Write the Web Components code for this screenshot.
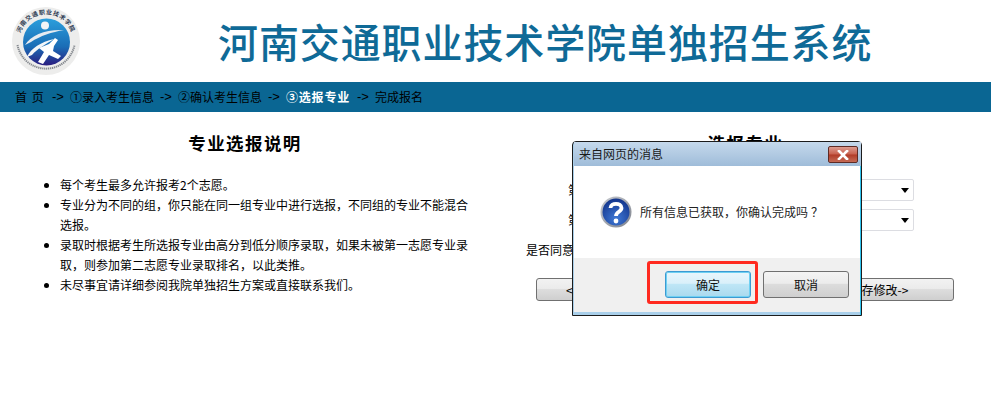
<!DOCTYPE html>
<html lang="zh">
<head>
<meta charset="utf-8">
<title>河南交通职业技术学院单独招生系统</title>
<style>
  html, body { margin: 0; padding: 0; background: #fff; }
  body { font: 12px/20px "Noto Sans CJK SC", "Liberation Sans", sans-serif; color: #000; width: 991px; height: 411px; overflow: hidden; position: relative; }
</style>
</head>
<body>
<app-header></app-header>
<step-bar></step-bar>
<main-layout>
  <info-panel slot="left" heading="专业选报说明">
    <li>每个考生最多允许报考2个志愿。</li>
    <li>专业分为不同的组，你只能在同一组专业中进行选报，不同组的专业不能混合选报。</li>
    <li>录取时根据考生所选报专业由高分到低分顺序录取，如果未被第一志愿专业录取，则参加第二志愿专业录取排名，以此类推。</li>
    <li>未尽事宜请详细参阅我院单独招生方案或直接联系我们。</li>
  </info-panel>
  <choice-panel slot="right" heading="选报专业"></choice-panel>
</main-layout>
<confirm-dialog caption="来自网页的消息" message="所有信息已获取，你确认完成吗"></confirm-dialog>

<script>
class AppHeader extends HTMLElement {
  constructor() {
    super();
    this.attachShadow({ mode: "open" });
  }

  connectedCallback() {
    this.shadowRoot.innerHTML = `
      <style>
        :host { display: flex; height: 82px; align-items: center; }
        .logo { width: 72px; height: 72px; margin: 0 0 1px 10px; flex: none; }
        h1 {
          margin: 0 0 0 136px;
          font: 500 40px/50px "Noto Sans CJK SC", sans-serif;
          letter-spacing: 0.900px;
          color: #0f6a97;
          white-space: nowrap;
        }
      </style>
      <svg class="logo" viewBox="0 0 72 72">
        <defs>
          <linearGradient id="disc" x1="0" y1="0" x2="0" y2="1">
            <stop offset="0" stop-color="#2c9fdc"/>
            <stop offset=".6" stop-color="#1a6db6"/>
            <stop offset="1" stop-color="#2a1c80"/>
          </linearGradient>
          <path id="arc-top" d="M10.500 28A26.700 26.700 0 0 1 61.500 28"/>
        </defs>
        <circle cx="36" cy="36" r="34" fill="#ededec"/>
        <circle cx="36.500" cy="37" r="23.500" fill="url(#disc)"/>
        <text font-size="6" font-weight="700" fill="#2b3850" font-family="Noto Sans CJK SC, sans-serif" letter-spacing="0.700"><textPath href="#arc-top">河南交通职业技术学院</textPath></text>
        <path d="M7.500 40A29 29 0 0 0 64.500 40" fill="none" stroke="#85898f" stroke-width="2" stroke-dasharray="1.300 .7"/>
        <circle cx="35" cy="20.500" r="4" fill="#f2f4f6"/>
        <path d="M15 40C21 30 36 24 54 25C42 27 30 31 21 37C19 38 17 39 15 40Z" fill="#e6ebf1"/>
        <path d="M17 52C21 43 31 37 44 34C36 39 27 44 22 50Z" fill="#f4f6f8"/>
        <path d="M29 43L39 39L45 33L48 35L44 41L43 46L51 51L48 54L39 50L33 59L28 57L34 47Z" fill="#fff"/>
      </svg>
      <h1>河南交通职业技术学院单独招生系统</h1>
    `;
  }
}

class StepBar extends HTMLElement {
  constructor() {
    super();
    this.attachShadow({ mode: "open" });
  }

  connectedCallback() {
    this.shadowRoot.innerHTML = `
      <style>
        :host {
          display: flex;
          height: 30px;
          align-items: center;
          padding-left: 15px;
          background: #0a6693;
          color: #000;
          font: 12px/30px "Noto Sans CJK SC", sans-serif;
          white-space: nowrap;
        }
        .home { width: 37px; word-spacing: 2px; }
        .arrow { width: 18px; font-family: "Liberation Sans", sans-serif; font-size: 13px; }
        .step { width: 90px; }
        .current { width: 71px; color: #fff; font-weight: 700; letter-spacing: 0.800px; }
      </style>
      <span class="home">首 页</span>
      <span class="arrow">-&gt;</span>
      <span class="step">①录入考生信息</span>
      <span class="arrow">-&gt;</span>
      <span class="step">②确认考生信息</span>
      <span class="arrow">-&gt;</span>
      <span class="current">③选报专业</span>
      <span class="arrow">-&gt;</span>
      <span>完成报名</span>
    `;
  }
}

class MainLayout extends HTMLElement {
  constructor() {
    super();
    this.attachShadow({ mode: "open" });
  }

  connectedCallback() {
    this.shadowRoot.innerHTML = `
      <style>
        :host { display: grid; grid-template-columns: 490px 1fr; column-gap: 10px; padding-top: 19px; }
      </style>
      <slot name="left"></slot>
      <slot name="right"></slot>
    `;
  }
}

class InfoPanel extends HTMLElement {
  constructor() {
    super();
    this.attachShadow({ mode: "open" });
  }

  connectedCallback() {
    this.shadowRoot.innerHTML = `
      <style>
        :host { display: block; }
        h2 { margin: 0; font: 700 17.500px/24px "Noto Sans CJK SC", sans-serif; letter-spacing: 1.400px; text-align: center; }
        ul { display: block; margin: 20px 20px 0 60px; padding: 0; list-style: disc; }
        ::slotted(li) { line-height: 20px; font-size: 12px; }
      </style>
      <h2>${this.getAttribute("heading")}</h2>
      <ul><slot></slot></ul>
    `;
  }
}

class ChoicePanel extends HTMLElement {
  constructor() {
    super();
    this.attachShadow({ mode: "open" });
  }

  connectedCallback() {
    this.shadowRoot.innerHTML = `
      <style>
        :host { display: block; }
        h2 { margin: 0; font: 700 17.500px/24px "Noto Sans CJK SC", sans-serif; letter-spacing: 1.400px; text-align: center; }
        .row { display: flex; align-items: center; gap: 14px; margin: 8px 0 0 68px; width: 346px; height: 22px; }
        .row.first { margin-top: 24px; }
        .row label { flex: none; width: 48px; }
        .fake-select {
          flex: 1;
          height: 100%;
          box-sizing: border-box;
          display: flex;
          align-items: center;
          justify-content: flex-end;
          padding-right: 3px;
          background: #fff;
          border: 1px solid #dcdde2;
          border-radius: 2px;
        }
        .fake-select i { width: 0; height: 0; margin-right: 1px; border: 4px solid transparent; border-top: 5px solid #000; border-bottom: 0; }
        .agree { margin: 9px 0 0 26px; line-height: 20px; white-space: nowrap; }
        .actions { display: flex; justify-content: space-between; margin: 18px 37px 0 36px; }
        .actions button {
          width: 150px;
          height: 23px;
          padding: 0;
          font: 12px/21px "Noto Sans CJK SC", sans-serif;
          color: #000;
          background: linear-gradient(#f2f2f2 0, #ebebeb 45%, #dddddd 50%, #cfcfcf 100%);
          border: 1px solid #707070;
          border-radius: 3px;
        }
        .actions button.back { padding-left: 29px; text-align: left; }
      </style>
      <h2>${this.getAttribute("heading")}</h2>
      <div class="row first"><label>第一志愿</label><div class="fake-select"><i></i></div></div>
      <div class="row"><label>第二志愿</label><div class="fake-select"><i></i></div></div>
      <div class="agree">是否同意调剂</div>
      <div class="actions">
        <button class="back">&lt;-返回上一步</button>
        <button>保存修改-&gt;</button>
      </div>
    `;
  }
}

class ConfirmDialog extends HTMLElement {
  constructor() {
    super();
    this.attachShadow({ mode: "open" });
  }

  connectedCallback() {
    this.shadowRoot.innerHTML = `
      <style>
        :host {
          position: absolute;
          left: 572px;
          top: 141px;
          width: 290px;
          height: 175px;
          box-sizing: border-box;
          display: flex;
          flex-direction: column;
          padding: 0 1px 3px 1px;
          background: #a9cfea;
          border: 1px solid #1c1c1c;
          border-radius: 4px 4px 0 0;
          box-shadow: inset -1px 0 0 #2fc3ee;
          font: 12px/20px "Noto Sans CJK SC", sans-serif;
        }
        .titlebar {
          flex: none;
          height: 24px;
          display: flex;
          align-items: center;
          justify-content: space-between;
          padding: 0 3px 0 5px;
          margin-right: -1px;
          background: linear-gradient(#c5d9ec, #9fbcd9);
          color: #1a1a1a;
        }
        .close {
          width: 30px;
          height: 17px;
          margin-top: 1px;
          box-sizing: border-box;
          display: flex;
          align-items: center;
          justify-content: center;
          background: linear-gradient(#dc9c90 0, #c8604e 48%, #b13b28 52%, #c46a55 100%);
          border: 1px solid #5e2b25;
          border-radius: 2px;
        }
        .body {
          flex: 1;
          display: flex;
          align-items: center;
          gap: 8px;
          padding: 0 0 0 26px;
          background: #fff;
          color: #222;
        }
        .mark { margin-left: 3px; }
        .footer {
          flex: none;
          height: 54px;
          display: flex;
          justify-content: flex-end;
          gap: 12px;
          box-sizing: border-box;
          padding: 13px 11px 0 0;
          background: #f0f0f0;
        }
        .footer button {
          position: relative;
          width: 86px;
          height: 27px;
          padding: 0;
          font: 12px/25px "Noto Sans CJK SC", sans-serif;
          color: #111;
          border-radius: 3px;
          background: linear-gradient(#f4f4f4 0, #ececec 45%, #dcdcdc 50%, #cfcfcf 100%);
          border: 1px solid #707070;
        }
        .footer button.primary {
          background: linear-gradient(#eaf6fc 0, #d9f0fa 45%, #bee6f6 50%, #a9d9ee 100%);
          border: 1px solid #3c9ad2;
          box-shadow: inset 0 0 0 1px #6fd0f2;
        }
        .highlight {
          position: absolute;
          left: -19px;
          top: -11px;
          width: 111px;
          height: 43px;
          box-sizing: border-box;
          border: 3px solid #ff2a20;
          border-radius: 3px;
          pointer-events: none;
        }
        button > span { position: relative; }
      </style>
      <div class="titlebar">
        <span>${this.getAttribute("caption")}</span>
        <span class="close">
          <svg width="12" height="10" viewBox="0 0 12 10"><path d="M2 1L10 9M10 1L2 9" stroke="#fff" stroke-width="2.600" stroke-linecap="square" fill="none"/></svg>
        </span>
      </div>
      <div class="body">
        <svg width="32" height="32" viewBox="0 0 32 32" style="flex:none">
          <defs>
            <radialGradient id="q" cx=".5" cy=".75" r=".8">
              <stop offset="0" stop-color="#3f79d6"/>
              <stop offset="1" stop-color="#0f2f86"/>
            </radialGradient>
            <linearGradient id="ring" x1="0" y1="0" x2="1" y2="1">
              <stop offset="0" stop-color="#c9ccd2"/>
              <stop offset="1" stop-color="#7d828c"/>
            </linearGradient>
          </defs>
          <circle cx="16" cy="16" r="15.500" fill="url(#ring)"/>
          <circle cx="16" cy="16" r="13.500" fill="url(#q)"/>
          <path d="M10.500 12C10.500 6.500 21.500 6.500 21.500 12C21.500 16 16 15.500 16 20" fill="none" stroke="#fff" stroke-width="3.800"/>
          <circle cx="16" cy="25" r="2.400" fill="#fff"/>
        </svg>
        <span>${this.getAttribute("message")}<span class="mark">？</span></span>
      </div>
      <div class="footer">
        <button class="primary"><span>确定</span><span class="highlight"></span></button>
        <button>取消</button>
      </div>
    `;
  }
}

customElements.define("app-header", AppHeader);
customElements.define("step-bar", StepBar);
customElements.define("main-layout", MainLayout);
customElements.define("info-panel", InfoPanel);
customElements.define("choice-panel", ChoicePanel);
customElements.define("confirm-dialog", ConfirmDialog);
</script>
</body>
</html>
